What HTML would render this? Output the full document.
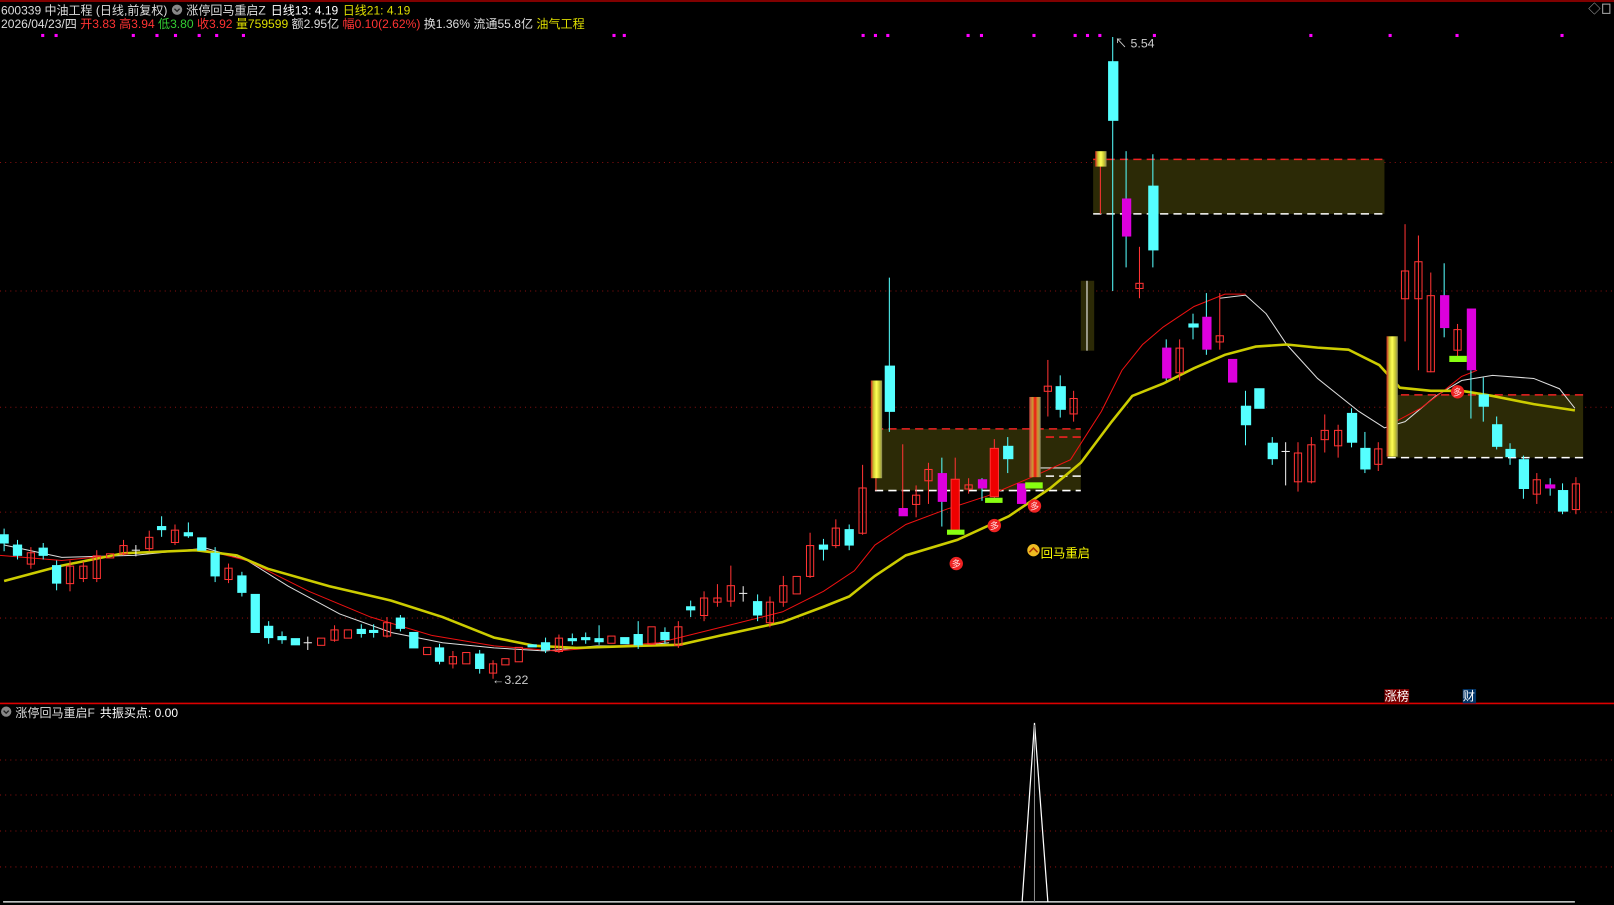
<!DOCTYPE html>
<html><head><meta charset="utf-8"><style>
html,body{margin:0;padding:0;background:#000;overflow:hidden}
svg{display:block}
text{font-family:"Liberation Sans","Noto Sans CJK SC",sans-serif;font-size:12px}
.hd{font-size:11.7px}
</style></head><body>
<svg width="1614" height="905" viewBox="0 0 1568 880" preserveAspectRatio="none" xmlns="http://www.w3.org/2000/svg">
<rect width="1568" height="880" fill="#000"/>
<line x1="0" y1="1" x2="1568" y2="1" stroke="#a00" stroke-width="1.5"/>
<g stroke="#8a1010" stroke-dasharray="1 4" stroke-width="1">
<line x1="0" y1="158" x2="1568" y2="158"/><line x1="0" y1="283" x2="1568" y2="283"/>
<line x1="0" y1="396" x2="1568" y2="396"/><line x1="0" y1="498" x2="1568" y2="498"/>
<line x1="0" y1="601" x2="1568" y2="601"/>
<line x1="0" y1="739" x2="1568" y2="739"/><line x1="0" y1="773" x2="1568" y2="773"/>
<line x1="0" y1="808" x2="1568" y2="808"/><line x1="0" y1="843" x2="1568" y2="843"/>
</g>
<line x1="0" y1="684" x2="1568" y2="684" stroke="#d00" stroke-width="1.5"/>
<line x1="3" y1="877" x2="1530" y2="877" stroke="#fff" stroke-width="1.2"/>
<polyline points="993,877 1005,703 1018,877" fill="none" stroke="#fff" stroke-width="1.2"/>
<line x1="1005" y1="705" x2="1005" y2="877" stroke="#888" stroke-width="1"/>

<!-- header -->
<text class="hd" x="1" y="14" fill="#ddd">600339 中油工程 (日线,前复权)</text>
<circle cx="172" cy="9.5" r="5" fill="#888"/><path d="M169.5 8.5 L172 11 L174.5 8.5" stroke="#222" fill="none" stroke-width="1.3"/>
<text class="hd" x="181" y="14" fill="#ddd">涨停回马重启Z</text>
<text class="hd" x="263" y="14" fill="#fff">日线13: 4.19</text>
<text class="hd" x="333" y="14" fill="#dd0">日线21: 4.19</text>
<text class="hd" x="1" y="27" fill="#ddd" textLength="567" lengthAdjust="spacingAndGlyphs">2026/04/23/四 <tspan fill="#f33">开3.83</tspan> <tspan fill="#f33">高3.94</tspan> <tspan fill="#3c3">低3.80</tspan> <tspan fill="#f33">收3.92</tspan> <tspan fill="#dd0">量759599</tspan> 额2.95亿 <tspan fill="#f33">幅0.10(2.62%)</tspan> 换1.36% 流通55.8亿 <tspan fill="#dd0">油气工程</tspan></text>
<text x="1543" y="13" fill="#aaa">◇</text><rect x="1557" y="4" width="7" height="9" fill="none" stroke="#aaa"/>
<g fill="#f0f">
<rect x="40" y="33" width="3" height="3"/><rect x="53" y="33" width="3" height="3"/><rect x="128" y="33" width="3" height="3"/><rect x="151" y="33" width="3" height="3"/><rect x="169" y="33" width="3" height="3"/><rect x="192" y="33" width="3" height="3"/><rect x="209" y="33" width="3" height="3"/><rect x="235" y="33" width="3" height="3"/><rect x="595" y="33" width="3" height="3"/><rect x="605" y="33" width="3" height="3"/>
<rect x="837" y="33" width="3" height="3"/><rect x="849" y="33" width="3" height="3"/><rect x="861" y="33" width="3" height="3"/><rect x="939" y="33" width="3" height="3"/><rect x="952" y="33" width="3" height="3"/><rect x="1003" y="33" width="3" height="3"/><rect x="1043" y="33" width="3" height="3"/><rect x="1055" y="33" width="3" height="3"/><rect x="1067" y="33" width="3" height="3"/><rect x="1120" y="33" width="3" height="3"/><rect x="1272" y="33" width="3" height="3"/><rect x="1349" y="33" width="3" height="3"/><rect x="1414" y="33" width="3" height="3"/><rect x="1516" y="33" width="3" height="3"/>
</g>

<!-- boxes -->
<g fill="#2c2a06">
<rect x="850" y="417" width="200" height="60"/><rect x="1003" y="425" width="47" height="38"/>
<rect x="1062" y="155" width="283" height="53"/><rect x="1348" y="384" width="190" height="61"/>
<rect x="1050" y="273" width="13" height="68"/>
</g>
<g stroke-dasharray="8 5" stroke-width="1.5" fill="none">
<line x1="850" y1="417" x2="1050" y2="417" stroke="#e22"/><line x1="850" y1="477" x2="1050" y2="477" stroke="#fff"/>
<line x1="1003" y1="425" x2="1050" y2="425" stroke="#e22"/><line x1="1003" y1="463" x2="1050" y2="463" stroke="#fff"/>
<line x1="1062" y1="155" x2="1345" y2="155" stroke="#e22"/><line x1="1062" y1="208" x2="1345" y2="208" stroke="#fff"/>
<line x1="1348" y1="384" x2="1538" y2="384" stroke="#e22"/><line x1="1348" y1="445" x2="1538" y2="445" stroke="#fff"/>
</g>
<line x1="1056" y1="273" x2="1056" y2="341" stroke="#fff"/>

<!-- MA lines -->
<polyline fill="none" stroke="#ddd" stroke-width="1" points="4,530 60,542 130,540 200,533 240,545 280,570 330,597 380,615 430,625 480,630 530,633 580,628 620,628 650,625"/>
<polyline fill="none" stroke="#ddd" stroke-width="1" points="1010,455 1040,455"/>
<polyline fill="none" stroke="#ddd" stroke-width="1" points="1185,290 1210,287 1230,305 1250,335 1280,368 1320,400 1345,416 1365,410 1395,385 1420,370 1450,365 1490,368 1515,378 1530,397"/>
<polyline fill="none" stroke="#e11" stroke-width="1" points="0,540 60,545 130,538 200,535 240,545 300,575 360,600 420,618 480,628 540,633 600,628 640,625 700,610 760,595 800,575 830,555 850,530 880,510 920,495 960,482 1000,465 1040,447 1070,400 1090,360 1110,335 1130,318 1160,298 1190,286 1210,286"/>
<polyline fill="none" stroke="#e11" stroke-width="1" points="1352,412 1380,397 1400,382 1420,366 1435,360"/>
<polyline fill="none" stroke="#cc0" stroke-width="2.5" points="4,565 60,550 120,538 190,535 230,540 260,553 320,570 380,584 430,600 480,620 520,628 560,630 620,628 660,627 700,618 760,605 800,590 825,580 850,560 880,540 930,525 980,502 1020,475 1050,450 1080,410 1100,385 1130,373 1160,358 1190,345 1220,337 1250,335 1280,338 1310,340 1340,355 1360,377 1390,380 1420,380 1450,385 1490,393 1530,399"/>

<!-- candles -->
<g stroke-width="1">
<g stroke="#5ff" fill="#5ff">
<line x1="4" y1="514" x2="4" y2="536"/><rect x="0" y="520" width="8" height="8"/>
<line x1="17" y1="525" x2="17" y2="544"/><rect x="13" y="530" width="8" height="10"/>
<line x1="42" y1="528" x2="42" y2="544"/><rect x="38" y="533" width="8" height="7"/>
<line x1="55" y1="545" x2="55" y2="574"/><rect x="51" y="550" width="8" height="17"/>
<line x1="157" y1="502" x2="157" y2="522"/><rect x="153" y="512" width="8" height="3"/>
<line x1="183" y1="508" x2="183" y2="523"/><rect x="179" y="518" width="8" height="3"/>
<rect x="192" y="523" width="8" height="12"/>
<line x1="209" y1="532" x2="209" y2="566"/><rect x="205" y="538" width="8" height="22"/>
<line x1="235" y1="556" x2="235" y2="580"/><rect x="231" y="560" width="8" height="16"/>
<rect x="244" y="578" width="8" height="37"/>
<line x1="261" y1="604" x2="261" y2="626"/><rect x="257" y="609" width="8" height="11"/>
<line x1="274" y1="614" x2="274" y2="626"/><rect x="270" y="619" width="8" height="3"/>
<rect x="283" y="621" width="8" height="6"/>
<line x1="351" y1="607" x2="351" y2="620"/><rect x="347" y="612" width="8" height="4"/>
<line x1="363" y1="607" x2="363" y2="620"/><rect x="359" y="613" width="8" height="2"/>
<line x1="389" y1="598" x2="389" y2="614"/><rect x="385" y="601" width="8" height="10"/>
<rect x="398" y="615" width="8" height="15"/>
<line x1="427" y1="626" x2="427" y2="646"/><rect x="423" y="630" width="8" height="13"/>
<line x1="466" y1="632" x2="466" y2="655"/><rect x="462" y="636" width="8" height="14"/>
<rect x="513" y="627" width="8" height="2"/>
<line x1="530" y1="620" x2="530" y2="635"/><rect x="526" y="625" width="8" height="7"/>
<line x1="556" y1="616" x2="556" y2="627"/><rect x="552" y="621" width="8" height="2"/>
<line x1="569" y1="615" x2="569" y2="626"/><rect x="565" y="620" width="8" height="2"/>
<line x1="582" y1="608" x2="582" y2="627"/><rect x="578" y="621" width="8" height="3"/>
<rect x="603" y="620" width="8" height="6"/>
<line x1="620" y1="604" x2="620" y2="631"/><rect x="616" y="617" width="8" height="10"/>
<line x1="646" y1="610" x2="646" y2="626"/><rect x="642" y="615" width="8" height="7"/>
<line x1="671" y1="584" x2="671" y2="600"/><rect x="667" y="590" width="8" height="3"/>
<line x1="736" y1="578" x2="736" y2="604"/><rect x="732" y="585" width="8" height="13"/>
<line x1="800" y1="524" x2="800" y2="545"/><rect x="796" y="530" width="8" height="4"/>
<line x1="825" y1="510" x2="825" y2="535"/><rect x="821" y="515" width="8" height="15"/>
<line x1="864" y1="270" x2="864" y2="420"/><rect x="860" y="356" width="9" height="44"/>
<line x1="979" y1="425" x2="979" y2="460"/><rect x="975" y="434" width="9" height="12"/>
<line x1="1030" y1="365" x2="1030" y2="406"/><rect x="1026" y="376" width="9" height="22"/>
<line x1="1081" y1="36" x2="1081" y2="283"/><rect x="1077" y="60" width="9" height="57"/>
<line x1="1120" y1="150" x2="1120" y2="260"/><rect x="1116" y="181" width="9" height="62"/>
<line x1="1159" y1="305" x2="1159" y2="330"/><rect x="1155" y="315" width="9" height="3"/>
<line x1="1210" y1="380" x2="1210" y2="433"/><rect x="1206" y="395" width="9" height="18"/>
<rect x="1219" y="378" width="9" height="19"/>
<line x1="1236" y1="425" x2="1236" y2="452"/><rect x="1232" y="431" width="9" height="15"/>
<line x1="1313" y1="397" x2="1313" y2="435"/><rect x="1309" y="402" width="9" height="28"/>
<line x1="1326" y1="420" x2="1326" y2="460"/><rect x="1322" y="436" width="9" height="20"/>
<line x1="1441" y1="367" x2="1441" y2="410"/><rect x="1437" y="384" width="9" height="11"/>
<line x1="1454" y1="405" x2="1454" y2="437"/><rect x="1450" y="413" width="9" height="21"/>
<line x1="1467" y1="431" x2="1467" y2="452"/><rect x="1463" y="437" width="9" height="7"/>
<line x1="1480" y1="443" x2="1480" y2="485"/><rect x="1476" y="447" width="9" height="28"/>
<line x1="1518" y1="470" x2="1518" y2="500"/><rect x="1514" y="477" width="9" height="20"/>
</g>
<g stroke="#f33" fill="none">
<line x1="30" y1="532" x2="30" y2="553"/><rect x="26.5" y="537.5" width="7" height="11"/>
<line x1="68" y1="545" x2="68" y2="575"/><rect x="64.5" y="550.5" width="7" height="17"/>
<line x1="81" y1="546" x2="81" y2="566"/><rect x="77.5" y="550.5" width="7" height="12"/>
<line x1="94" y1="535" x2="94" y2="566"/><rect x="90.5" y="540.5" width="7" height="22"/>
<rect x="103.5" y="538.5" width="7" height="4"/>
<line x1="120" y1="525" x2="120" y2="540"/><rect x="116.5" y="530.5" width="7" height="8"/>
<line x1="145" y1="516" x2="145" y2="536"/><rect x="141.5" y="522.5" width="7" height="11"/>
<line x1="170" y1="510" x2="170" y2="530"/><rect x="166.5" y="515.5" width="7" height="12"/>
<line x1="222" y1="548" x2="222" y2="567"/><rect x="218.5" y="552.5" width="7" height="11"/>
<rect x="308.5" y="620.5" width="7" height="7"/>
<line x1="325" y1="608" x2="325" y2="624"/><rect x="321.5" y="612.5" width="7" height="10"/>
<rect x="334.5" y="612.5" width="7" height="8"/>
<line x1="376" y1="600" x2="376" y2="620"/><rect x="372.5" y="605.5" width="7" height="13"/>
<rect x="411.5" y="629.5" width="7" height="7"/>
<line x1="440" y1="633" x2="440" y2="650"/><rect x="436.5" y="638.5" width="7" height="7"/>
<rect x="449.5" y="634.5" width="7" height="11"/>
<line x1="479" y1="642" x2="479" y2="660"/><rect x="475.5" y="645.5" width="7" height="9"/>
<rect x="487.5" y="640.5" width="7" height="6"/>
<rect x="500.5" y="629.5" width="7" height="14"/>
<line x1="543" y1="617" x2="543" y2="635"/><rect x="539.5" y="620.5" width="7" height="13"/>
<rect x="590.5" y="618.5" width="7" height="7"/>
<rect x="629.5" y="609.5" width="7" height="17"/>
<line x1="659" y1="604" x2="659" y2="630"/><rect x="655.5" y="609.5" width="7" height="18"/>
<line x1="684" y1="575" x2="684" y2="604"/><rect x="680.5" y="581.5" width="7" height="17"/>
<line x1="697" y1="568" x2="697" y2="590"/><rect x="693.5" y="581.5" width="7" height="4"/>
<line x1="710" y1="550" x2="710" y2="590"/><rect x="706.5" y="569.5" width="7" height="15"/>
<line x1="748" y1="580" x2="748" y2="610"/><rect x="744.5" y="585.5" width="7" height="20"/>
<line x1="761" y1="560" x2="761" y2="590"/><rect x="757.5" y="569.5" width="7" height="16"/>
<rect x="770.5" y="560.5" width="7" height="17"/>
<line x1="787" y1="518" x2="787" y2="562"/><rect x="783.5" y="530.5" width="7" height="30"/>
<line x1="812" y1="505" x2="812" y2="533"/><rect x="808.5" y="513.5" width="7" height="17"/>
<line x1="838" y1="452" x2="838" y2="520"/><rect x="834.5" y="474.5" width="7" height="44"/>
<line x1="890" y1="472" x2="890" y2="503"/><rect x="886.5" y="481.5" width="7" height="9"/>
<line x1="902" y1="450" x2="902" y2="490"/><rect x="898.5" y="456.5" width="7" height="11"/>
<line x1="941" y1="465" x2="941" y2="480"/><rect x="937.5" y="471.5" width="7" height="4"/>
<line x1="1018" y1="350" x2="1018" y2="405"/><rect x="1014.5" y="375.5" width="7" height="5"/>
<line x1="1043" y1="380" x2="1043" y2="410"/><rect x="1039.5" y="387.5" width="7" height="15"/>
<line x1="1107" y1="240" x2="1107" y2="290"/><rect x="1103.5" y="275.5" width="7" height="5"/>
<line x1="1146" y1="330" x2="1146" y2="370"/><rect x="1142.5" y="338.5" width="7" height="24"/>
<line x1="1185" y1="285" x2="1185" y2="340"/><rect x="1181.5" y="326.5" width="7" height="6"/>
<line x1="1261" y1="430" x2="1261" y2="478"/><rect x="1257.5" y="440.5" width="7" height="28"/>
<line x1="1274" y1="425" x2="1274" y2="470"/><rect x="1270.5" y="432.5" width="7" height="36"/>
<line x1="1287" y1="403" x2="1287" y2="440"/><rect x="1283.5" y="418.5" width="7" height="9"/>
<line x1="1300" y1="413" x2="1300" y2="445"/><rect x="1296.5" y="418.5" width="7" height="15"/>
<line x1="1339" y1="430" x2="1339" y2="458"/><rect x="1335.5" y="436.5" width="7" height="15"/>
<line x1="1365" y1="218" x2="1365" y2="332"/><rect x="1361.5" y="263.5" width="7" height="27"/>
<line x1="1378" y1="229" x2="1378" y2="360"/><rect x="1374.5" y="254.5" width="7" height="36"/>
<line x1="1390" y1="265" x2="1390" y2="362"/><rect x="1386.5" y="287.5" width="7" height="74"/>
<line x1="1416" y1="315" x2="1416" y2="350"/><rect x="1412.5" y="320.5" width="7" height="20"/>
<line x1="1493" y1="460" x2="1493" y2="490"/><rect x="1489.5" y="466.5" width="7" height="14"/>
<line x1="1531" y1="464" x2="1531" y2="500"/><rect x="1527.5" y="470.5" width="7" height="25"/>
</g>
<g stroke="#eee">
<line x1="132" y1="530" x2="132" y2="541"/><line x1="128" y1="535" x2="136" y2="535"/>
<line x1="299" y1="619" x2="299" y2="632"/><line x1="295" y1="625" x2="303" y2="625"/>
<line x1="722" y1="570" x2="722" y2="585"/><line x1="718" y1="577" x2="726" y2="577"/>
<line x1="1249" y1="430" x2="1249" y2="472"/><line x1="1245" y1="439" x2="1253" y2="439"/>
</g>
<g fill="#d0d">
<line x1="877" y1="432" x2="877" y2="500" stroke="#f33"/><rect x="873" y="494" width="9" height="8"/>
<line x1="915" y1="445" x2="915" y2="512" stroke="#5ff"/><rect x="911" y="460" width="9" height="28"/>
<line x1="954" y1="465" x2="954" y2="487" stroke="#5ff"/><rect x="950" y="466" width="9" height="9"/>
<rect x="988" y="470" width="9" height="20"/>
<line x1="1094" y1="147" x2="1094" y2="260" stroke="#5ff"/><rect x="1090" y="193" width="9" height="37"/>
<line x1="1133" y1="330" x2="1133" y2="370" stroke="#5ff"/><rect x="1129" y="338" width="9" height="30"/>
<line x1="1172" y1="285" x2="1172" y2="345" stroke="#5ff"/><rect x="1168" y="308" width="9" height="32"/>
<rect x="1193" y="349" width="9" height="23"/>
<line x1="1403" y1="256" x2="1403" y2="328" stroke="#5ff"/><rect x="1399" y="287" width="9" height="32"/>
<line x1="1429" y1="360" x2="1429" y2="407" stroke="#5ff"/><rect x="1425" y="300" width="9" height="60"/>
<line x1="1506" y1="465" x2="1506" y2="482" stroke="#5ff"/><rect x="1501" y="471" width="10" height="4"/>
</g>
<line x1="928" y1="445" x2="928" y2="517" stroke="#f33"/><rect x="924" y="466" width="8" height="51" fill="#e00" stroke="#f33"/>
<line x1="966" y1="427" x2="966" y2="486" stroke="#f33"/><rect x="962" y="436" width="8" height="47" fill="#e00" stroke="#f33"/>
<defs><linearGradient id="yg" x1="0" x2="1"><stop offset="0" stop-color="#c22"/><stop offset="0.25" stop-color="#cc3"/><stop offset="0.5" stop-color="#ff5"/><stop offset="0.75" stop-color="#cc3"/><stop offset="1" stop-color="#885"/></linearGradient>
<linearGradient id="rg" x1="0" x2="1"><stop offset="0" stop-color="#c44"/><stop offset="0.3" stop-color="#c93"/><stop offset="0.5" stop-color="#e11"/><stop offset="0.75" stop-color="#c93"/><stop offset="1" stop-color="#886"/></linearGradient></defs>
<line x1="851" y1="465" x2="851" y2="477" stroke="#f33"/><rect x="846" y="370" width="11" height="95" fill="url(#yg)"/>
<rect x="1000" y="386" width="11" height="78" fill="url(#rg)"/>
<line x1="1069" y1="162" x2="1069" y2="208" stroke="#f33"/><rect x="1064" y="147" width="11" height="15" fill="url(#yg)"/>
<rect x="1347" y="327" width="11" height="117" fill="url(#yg)"/>
<g fill="#8f1">
<rect x="920" y="515" width="17" height="5"/><rect x="957" y="484" width="17" height="5"/><rect x="996" y="469" width="17" height="6"/><rect x="1408" y="346" width="17" height="6"/>
</g>
</g>

<!-- markers -->
<circle cx="929" cy="548" r="6.5" fill="#e22"/><text x="924.5" y="551.5" fill="#fdd" style="font-size:9px">多</text>
<circle cx="966" cy="511" r="6.5" fill="#e22"/><text x="961.5" y="514.5" fill="#fdd" style="font-size:9px">多</text>
<circle cx="1005" cy="492" r="6.5" fill="#e22"/><text x="1000.5" y="495.5" fill="#fdd" style="font-size:9px">多</text>
<circle cx="1416" cy="381" r="6.5" fill="#e22"/><text x="1411.5" y="384.5" fill="#fdd" style="font-size:9px">多</text>
<circle cx="1004" cy="535" r="6" fill="#eb2"/><path d="M1000 537 L1004 533 L1008 537" stroke="#a30" stroke-width="1.5" fill="none"/>
<text x="1011" y="542" fill="#ff0">回马重启</text>
<text x="1083" y="46" fill="#ccc">↖ 5.54</text>
<text x="478" y="665" fill="#ccc">←3.22</text>
<rect x="1345" y="670" width="24" height="14" fill="#700"/><text x="1345" y="681" fill="#fff">涨榜</text>
<rect x="1421" y="670" width="13" height="14" fill="#036"/><text x="1421" y="681" fill="#fff">财</text>

<circle cx="6" cy="692" r="5" fill="#888"/><path d="M3.5 691 L6 693.5 L8.5 691" stroke="#222" fill="none" stroke-width="1.3"/>
<text class="hd" x="15" y="697" fill="#ddd">涨停回马重启F</text><text class="hd" x="97" y="697" fill="#fff">共振买点: 0.00</text>
</svg>
</body></html>
